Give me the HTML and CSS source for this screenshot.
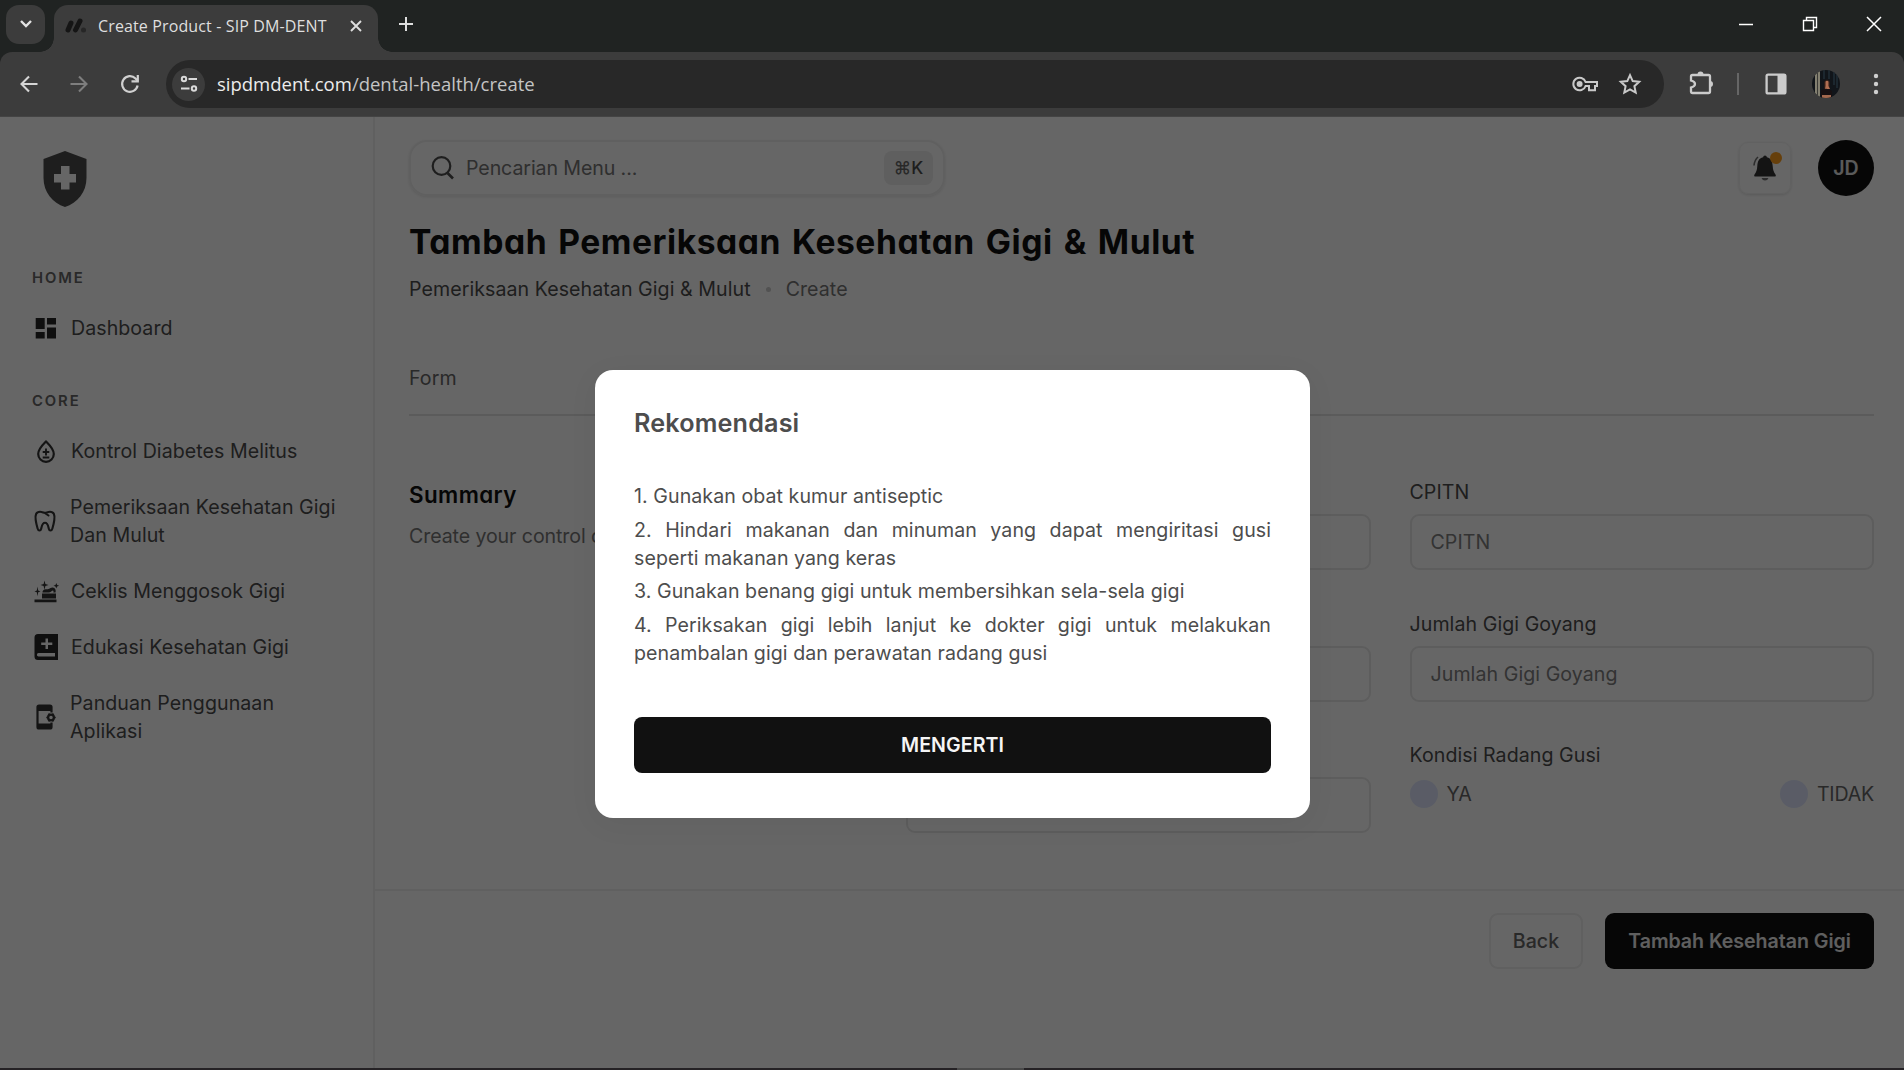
FILE: index.html
```
<!DOCTYPE html>
<html lang="id">
<head>
<meta charset="utf-8">
<title>Create Product - SIP DM-DENT</title>
<link rel="stylesheet" href="styles.css">
</head>
<body>
<div class="browser">
  <div class="tabstrip">
    <div class="tab-search"><svg width="14" height="10" viewBox="0 0 14 10"><path d="M2 2l5 5 5-5" fill="none" stroke="#e3e3e3" stroke-width="2.4"/></svg></div>
    <div class="tab">
      <svg class="favicon" width="22" height="16" viewBox="0 0 22 16"><path d="M3 12L6 5M10.500 12L15 3" stroke="#151515" stroke-width="5" stroke-linecap="round"/><circle cx="18.500" cy="12" r="2.500" fill="#262626"/></svg>
      <span class="tab-title">Create Product - SIP DM-DENT</span>
      <svg class="tab-close" width="12" height="12" viewBox="0 0 12 12"><path d="M1 1l10 10M11 1L1 11" stroke="#dedede" stroke-width="1.900"/></svg>
    </div>
    <svg class="new-tab" width="16" height="16" viewBox="0 0 16 16"><path d="M8 1v14M1 8h14" stroke="#dedede" stroke-width="2"/></svg>
    <div class="window-controls">
      <svg width="16" height="16" viewBox="0 0 16 16"><path d="M1 8.500h14" stroke="#fff" stroke-width="1.500"/></svg>
      <svg width="16" height="16" viewBox="0 0 16 16"><path d="M1.500 4.500h10v10h-10zM4.500 4.500v-3h10v10h-3" fill="none" stroke="#fff" stroke-width="1.400"/></svg>
      <svg width="16" height="16" viewBox="0 0 16 16"><path d="M1 1l14 14M15 1L1 15" stroke="#fff" stroke-width="1.500"/></svg>
    </div>
  </div>
  <div class="toolbar">
    <div class="nav-icons">
      <svg width="18" height="18" viewBox="0 0 18 18"><path d="M17.500 9H2M9 1.500L1.500 9 9 16.500" fill="none" stroke="#d5d5d5" stroke-width="2.100"/></svg>
      <svg width="18" height="18" viewBox="0 0 18 18"><path d="M.5 9H16M9 1.500L16.500 9 9 16.500" fill="none" stroke="#7e7e7e" stroke-width="2.100"/></svg>
      <svg width="20" height="20" viewBox="0 0 20 20"><path d="M17.600 11.500A7.800 7.800 0 1 1 15.500 4.500L18 7" fill="none" stroke="#d0d0d0" stroke-width="2.200"/><path d="M18.900 1v7.400h-7.400V6.300h5.200V1z" fill="#d0d0d0"/></svg>
    </div>
    <div class="omnibox">
      <span class="site-info"><svg width="18" height="18" viewBox="0 0 18 18"><g fill="none" stroke="#dadada" stroke-width="2"><circle cx="4" cy="4" r="2.200"/><circle cx="14" cy="13.500" r="2.200"/><path d="M8.500 4H17M1 13.500h8.500"/></g></svg></span>
      <span class="url">sipdmdent.com<span class="url-path">/dental-health/create</span></span>
      <svg class="key" width="26" height="16" viewBox="0 0 26 16"><path d="M13.600 6A6.300 6.300 0 1 0 13.600 10H17v4.200h6V10h2V6z" fill="none" stroke="#c9c9c9" stroke-width="2"/><circle cx="7.600" cy="8" r="3" fill="#c9c9c9"/></svg>
      <svg width="24" height="24" viewBox="0 0 24 24"><path d="M12 3.200l2.700 5.900 6.500.7-4.800 4.400 1.300 6.400L12 17.400l-5.700 3.200 1.300-6.400-4.800-4.400 6.500-.7z" fill="none" stroke="#c9c9c9" stroke-width="2"/></svg>
    </div>
    <svg class="puzzle" width="26" height="26" viewBox="0 0 26 26"><path d="M4.500 5h16q1.500 0 1.500 1.500v15q0 1.500-1.500 1.500h-16Q3 23 3 21.500v-4q4-1 4-3.500t-4-3.500v-4Q3 5 4.500 5z" fill="none" stroke="#cbcbcb" stroke-width="2.300"/><path d="M9.500 4.500a3 3 0 0 1 6 0zM22 11a3 3 0 0 1 0 6z" fill="#cbcbcb"/></svg>
    <span class="toolbar-divider"></span>
    <svg class="panel" width="22" height="22" viewBox="0 0 22 22"><rect x="1.600" y="1.600" width="18.800" height="18.800" rx="1.500" fill="none" stroke="#cbcbcb" stroke-width="2.300"/><path d="M12.500 1h8v20h-8z" fill="#cbcbcb"/></svg>
    <svg class="profile" width="28" height="28" viewBox="0 0 28 28"><defs><clipPath id="pc"><circle cx="14" cy="14" r="14"/></clipPath></defs><g clip-path="url(#pc)"><path fill="#11151a" d="M0 0h28v28H0z"/><path fill="#827f70" d="M3 0h5v28H3z"/><path fill="#3b3a36" d="M5 0h1v28H5z"/><path d="M12 0v9M17 0v9M22 0v15M25 4v14" stroke="#26343f" stroke-width="1.200"/><path fill="#2e1d17" d="M12 12q3-5 6 0v7h-6z"/><path fill="#b06e52" d="M13.500 11.500q1.500-1.500 3 0V16l1.500 3h-5l.5-3z"/><path fill="#171012" d="M9 20q6-3 11 1v7H9z"/><path fill="#a3694f" d="M10 25h9v3h-9z"/></g></svg>
    <svg class="kebab" width="6" height="22" viewBox="0 0 6 22"><g fill="#d0d0d0"><circle cx="3" cy="3" r="2.200"/><circle cx="3" cy="11" r="2.200"/><circle cx="3" cy="19" r="2.200"/></g></svg>
  </div>
</div>

<div class="page">
  <aside class="sidebar">
    <svg class="logo" width="44" height="58" viewBox="0 0 44 58"><path fill="#4d4d4d" fill-rule="evenodd" d="M22 1l21.500 8v19c0 14-9 25-21.500 29C9.500 53 .5 42 .5 28V9zM18 16v8h-7v8.500h7v7h8.500v-7H33V24h-6.500v-8z"/></svg>
    <h6 class="nav-heading">HOME</h6>
    <a class="nav-item"><svg viewBox="0 0 28 28"><path fill="#262626" d="M3.700 4h9v11h-9zM15 4h9v6.500h-9zM3.700 18h9v6.500h-9zM15 13.500h9v11h-9z"/></svg>Dashboard</a>
    <h6 class="nav-heading nav-heading-core">CORE</h6>
    <a class="nav-item"><svg viewBox="0 0 28 28"><path d="M14 4.500C10.500 8 6.200 12 6.200 17a7.800 7.800 0 0 0 15.600 0C21.800 12 17.500 8 14 4.500z" fill="none" stroke="#333" stroke-width="2.200"/><path d="M14 11.500v7M10.700 15h6.600M10.700 20.500h6.600" stroke="#333" stroke-width="1.900"/></svg>Kontrol Diabetes Melitus</a>
    <a class="nav-item nav-item-tall"><svg viewBox="0 0 28 28"><path d="M9 4.800C5 4.800 4 8 4.700 13c.4 3 1 5.500 1.900 8.500.7 2.600 3 2.700 3.600.2.700-3 1-6 3.800-6s3.100 3 3.800 6c.6 2.500 2.900 2.400 3.600-.2.900-3 1.500-5.500 1.900-8.500.7-5-.3-8.200-4.300-8.200-2.500 0-3.400 1-5 1s-2.500-1-5-1zM13 5.500l4.500 3" fill="none" stroke="#333" stroke-width="2.100" stroke-linecap="round"/></svg><span>Pemeriksaan Kesehatan Gigi Dan Mulut</span></a>
    <a class="nav-item"><svg viewBox="0 0 28 28"><path fill="#333" d="M2.500 22.500h22v2.700h-22zM10 16.500h14v5H10zM10.500 15.500c0-4 4-3 6-3.600 2-.5 2.500-1.500 4-1.400 3 .2 3.600 3 3 5h-2.200c.8-2-.5-2.600-1.500-1.500-1 1-2.500 1.500-4 1.500zM12.500 3.500l.9 3.600 3.100 1-3.100 1-.9 3.600-.9-3.600-3.100-1 3.100-1zM24.300 6l.8 2 2 .8-2 .8-.8 2-.8-2-2-.8 2-.8zM5.500 9.500l.7 4 2.300.9-2.300.9-.7 4-.7-4-2.300-.9 2.300-.9z"/></svg>Ceklis Menggosok Gigi</a>
    <a class="nav-item"><svg viewBox="0 0 28 28"><path fill="#262626" fill-rule="evenodd" d="M6 1h20v26H6a3.500 3.500 0 0 1-3.500-3.500v-19A3.500 3.500 0 0 1 6 1zM13.500 5.500v4H9.200v2.400h4.300v4h2.500v-4h4.300V9.500H16v-4zM6.500 20q-1.600 0-1.600 1.700t1.600 1.700H23V20z"/></svg>Edukasi Kesehatan Gigi</a>
    <a class="nav-item nav-item-tall"><svg viewBox="0 0 28 28"><path d="M20.500 9.500V4q0-1.500-1.500-1.500H8Q6.500 2.500 6.500 4v20q0 1.500 1.500 1.500h11q1.500 0 1.500-1.500v-4.500M6.500 7h14M6.500 21.500h14" fill="none" stroke="#333" stroke-width="2.200"/><path d="M6.500 3h14v3h-14zM6.500 22h14v3h-14z" fill="#333"/><circle cx="20" cy="14.500" r="2.900" fill="none" stroke="#333" stroke-width="2.300"/><path d="M15.300 14.500h1.600M23.100 14.500h1.600M17.600 10.500l.8 1.400M21.600 17.100l.8 1.400M17.600 18.500l.8-1.400M21.600 11.900l.8-1.400" stroke="#333" stroke-width="1.700"/></svg><span>Panduan Penggunaan Aplikasi</span></a>
  </aside>

  <main class="main">
    <header class="topbar">
      <div class="search">
        <svg width="24" height="26" viewBox="0 0 24 26"><circle cx="10.500" cy="11" r="8.800" fill="none" stroke="#4d4d4d" stroke-width="2.200"/><path d="M16.500 18l5.500 5.500" stroke="#4d4d4d" stroke-width="2.600"/></svg>
        <span class="search-text">Pencarian Menu ...</span>
        <kbd class="shortcut"><span class="command">⌘</span>K</kbd>
      </div>
      <div class="bell"><svg width="26" height="28" viewBox="0 0 26 28"><path fill="#333" d="M13 1.500q1.700 0 1.900 1.800c4.500 1 5.500 4.500 5.800 8.700.2 4 1 6 2.800 8.500q1 2-1 2h-19q-2 0-1-2c1.800-2.500 2.600-4.500 2.800-8.500.3-4.200 1.300-7.700 5.800-8.700Q11.300 1.500 13 1.500z"/><path d="M9.500 24h7q-1 2.500-3.500 2.500T9.500 24z" fill="#707070"/><path d="M2 11.500Q2.500 6 6 3" fill="none" stroke="#707070" stroke-width="1.600"/></svg><span class="bell-dot"></span></div>
      <div class="avatar">JD</div>
    </header>
    <h1 class="title">Tambah Pemeriksaan Kesehatan Gigi &amp; Mulut</h1>
    <div class="breadcrumb"><span>Pemeriksaan Kesehatan Gigi &amp; Mulut</span><i class="crumb-dot"></i><span class="crumb-current">Create</span></div>
    <div class="form-tab">Form</div>
    <section class="form">
      <div class="summary"><h2>Summary</h2><p>Create your control d</p></div>
      <div class="fields">
        <div class="field"><label></label><div class="input"></div></div>
        <div class="field"><label>CPITN</label><div class="input">CPITN</div></div>
        <div class="field"><label></label><div class="input"></div></div>
        <div class="field"><label>Jumlah Gigi Goyang</label><div class="input">Jumlah Gigi Goyang</div></div>
        <div class="field"><label></label><div class="input"></div></div>
        <div class="field"><label>Kondisi Radang Gusi</label><div class="radios"><span class="radio"><i></i>YA</span><span class="radio"><i></i>TIDAK</span></div></div>
      </div>
    </section>
    <footer class="actions"><button class="btn btn-outline">Back</button><button class="btn btn-dark">Tambah Kesehatan Gigi</button></footer>
  </main>

  <div class="overlay">
    <div class="modal">
      <h3>Rekomendasi</h3>
      <p>1. Gunakan obat kumur antiseptic</p>
      <p>2. Hindari makanan dan minuman yang dapat mengiritasi gusi seperti makanan yang keras</p>
      <p>3. Gunakan benang gigi untuk membersihkan sela-sela gigi</p>
      <p>4. Periksakan gigi lebih lanjut ke dokter gigi untuk melakukan penambalan gigi dan perawatan radang gusi</p>
      <button class="btn-confirm">MENGERTI</button>
    </div>
  </div>
</div>
<div class="window-edge"><span></span></div>
</body>
</html>
```

FILE: styles.css
```
* { box-sizing: border-box; margin: 0; padding: 0; }
body {
  width: 1904px; height: 1070px; overflow: hidden;
  display: flex; flex-direction: column;
  font: 430 19.6px/28px Inter, "Liberation Sans", sans-serif;
  letter-spacing: .06px;
  color: #4d4d4d; background: #202322;
}
svg { display: block; flex: none; }
button { font: inherit; letter-spacing: inherit; border: 0; }

/* Browser window */
.browser { height: 117px; flex: none; font-family: "Open Sans", "Noto Sans", sans-serif; letter-spacing: 0; }
.tabstrip { height: 52px; display: flex; align-items: center; background: #202322; padding-left: 6px; }
.tab-search { width: 39px; height: 39px; margin-bottom: 4px; border-radius: 13px; background: #3c3c3c; display: flex; align-items: center; justify-content: center; }
.tab { position: relative; align-self: flex-end; width: 324px; height: 47px; margin-left: 9px; padding: 0 16px 6px 11px; border-radius: 14px 14px 0 0; background: #3c3c3c; display: flex; align-items: center; }
.tab::before, .tab::after { content: ""; position: absolute; bottom: 0; width: 14px; height: 14px; }
.tab::before { left: -14px; background: radial-gradient(circle at 0 0, transparent 13.500px, #3c3c3c 14px); }
.tab::after { right: -14px; background: radial-gradient(circle at 100% 0, transparent 13.500px, #3c3c3c 14px); }
.tab-title { width: 234px; margin-left: 11px; font-size: 16px; line-height: 24px; letter-spacing: .13px; color: #dfdfdf; white-space: nowrap; }
.tab-close { margin-left: auto; }
.new-tab { margin: 0 0 4px 20px; }
.window-controls { margin: 0 22px 4px auto; display: flex; gap: 48px; }
.toolbar { height: 65px; display: flex; align-items: center; background: #3c3c3c; border-bottom: 1px solid #444; border-radius: 12px 12px 0 0; }
.nav-icons { width: 166px; padding-left: 20px; display: flex; align-items: center; gap: 32px; }
.omnibox { width: 1498px; height: 48px; padding: 0 22px 0 6px; border-radius: 24px; background: #282828; display: flex; align-items: center; }
.site-info { width: 33px; height: 33px; border-radius: 50%; background: #3c3c3c; display: flex; align-items: center; justify-content: center; }
.url { margin-left: 12px; color: #ececec; font-size: 18.500px; }
.url-path { color: #c4c4c4; }
.key { margin-left: auto; margin-right: 20px; }
.puzzle { margin-left: 24px; margin-bottom: 3px; }
.toolbar-divider { width: 2px; height: 22px; background: #666; margin-left: 23px; }
.panel { margin-left: 26px; }
.profile { margin-left: 25px; }
.kebab { margin-left: 33px; }

/* Page */
.page { position: relative; flex: 1; display: flex; background: #fff; min-height: 0; }
.sidebar { width: 375px; flex: none; border-right: 2px solid #f0f0f0; padding: 33px 32px 0 32px; }
.logo { margin-left: 11px; }
.nav-heading { margin-top: 59px; height: 23px; font: 600 14.800px/23px Inter, sans-serif; letter-spacing: 1.900px; color: #666; }
.nav-heading + .nav-item { margin-top: 10px; }
.nav-item + .nav-heading-core { margin-top: 34px; }
.nav-item { height: 56px; display: flex; align-items: center; gap: 11px; }
.nav-item svg { width: 28px; height: 28px; }
.nav-item-tall { height: 84px; margin-left: -1px; }
.main { flex: 1; min-width: 0; display: flex; flex-direction: column; }
.topbar { display: flex; align-items: center; margin: 22px 30px 0 34px; height: 58px; }
.search { width: 536px; height: 56px; padding: 0 10px 0 20px; border: 2px solid #f0f0f0; border-radius: 18px; box-shadow: 0 1px 3px #0000001a; display: flex; align-items: center; }
.search-text { margin-left: 11px; letter-spacing: -.1px; color: #757575; }
.shortcut { margin-left: auto; width: 49px; height: 34px; border-radius: 8px; background: #ededed; font: 500 17.500px/34px Inter, sans-serif; display: flex; justify-content: center; }
.command { font-family: Inter, "DejaVu Sans", sans-serif; color: #666; }
.bell { position: relative; margin-left: auto; width: 52px; height: 52px; border: 1px solid #f3f3f3; border-radius: 9px; box-shadow: 0 1px 3px #00000022; display: flex; align-items: center; justify-content: center; }
.bell-dot { position: absolute; right: 8px; top: 9px; width: 12px; height: 12px; border-radius: 50%; background: #ff9f1c; }
.avatar { width: 56px; height: 56px; margin-left: 27px; border-radius: 50%; background: #111; color: #e0e0e0; font-weight: 600; line-height: 56px; text-align: center; }
.title { margin: 23px 0 0 34px; font: 700 33.600px/44px Inter, sans-serif; font-feature-settings: "cv11"; letter-spacing: .56px; word-spacing: 2.500px; color: #111; white-space: nowrap; }
.breadcrumb { display: flex; align-items: center; margin: 11px 0 0 34px; height: 28px; }
.crumb-dot { width: 5px; height: 5px; border-radius: 50%; background: #ccc; margin: 0 15px 0 15px; }
.crumb-current { color: #777; }
.form-tab { margin: 61px 30px 0 34px; height: 52px; border-bottom: 2px solid #e3e3e3; color: #666; }
.form { display: flex; margin: 62px 30px 0 34px; }
.summary { width: 497px; flex: none; }
.summary h2 { margin-top: 3px; font: 600 22.400px/28px Inter, sans-serif; font-feature-settings: "cv11"; letter-spacing: .4px; color: #111; }
.summary p { margin-top: 13px; white-space: nowrap; color: #777; letter-spacing: -.1px; }
.fields { flex: 1; display: grid; grid-template-columns: 1fr 1fr; column-gap: 39px; row-gap: 38.600px; }
.field { height: 93px; }
.field label { display: block; height: 36px; line-height: 28px; }
.input { height: 56px; border: 2px solid #e8e8e8; border-radius: 9px; padding: 0 19px; line-height: 53px; color: #808080; }
.radios { display: flex; justify-content: space-between; padding-top: 3px; }
.radio { display: flex; align-items: center; gap: 9px; color: #666; letter-spacing: -.2px; }
.radio i { width: 28px; height: 28px; border-radius: 50%; background: #e0e7ff; }
.actions { margin-top: 55px; border-top: 2px solid #efefef; padding: 22px 30px 0 0; display: flex; justify-content: flex-end; gap: 22px; }
.btn { height: 56px; border-radius: 9px; }
.btn-outline { width: 94px; border: 2px solid #efefef; background: #fff; color: #666; font-weight: 500; }
.btn-dark { width: 269px; background: #111; color: #ededed; font-weight: 600; letter-spacing: -.05px; }

/* Recommendation dialog */
.overlay { position: absolute; inset: 0; background: rgba(0, 0, 0, .6); display: flex; justify-content: center; align-items: flex-start; padding: 252.500px 0 0 1px; }
.modal { width: 715px; height: 448.500px; padding: 39px; border-radius: 18px; background: #fff; box-shadow: 0 6px 30px #0000000d; }
.modal h3 { font: 600 25.200px/28px Inter, sans-serif; letter-spacing: .15px; margin-bottom: 45.500px; }
.modal p { margin-bottom: 5.600px; text-align: justify; }
.btn-confirm { width: 100%; height: 56px; margin-top: 44.500px; border-radius: 8px; background: #111; color: #f5f5f5; font-weight: 600; }

.window-edge { height: 2px; flex: none; background: #252225; padding-left: 957px; }
.window-edge span { display: block; width: 67px; height: 2px; background: #4a4a4a; }
```
